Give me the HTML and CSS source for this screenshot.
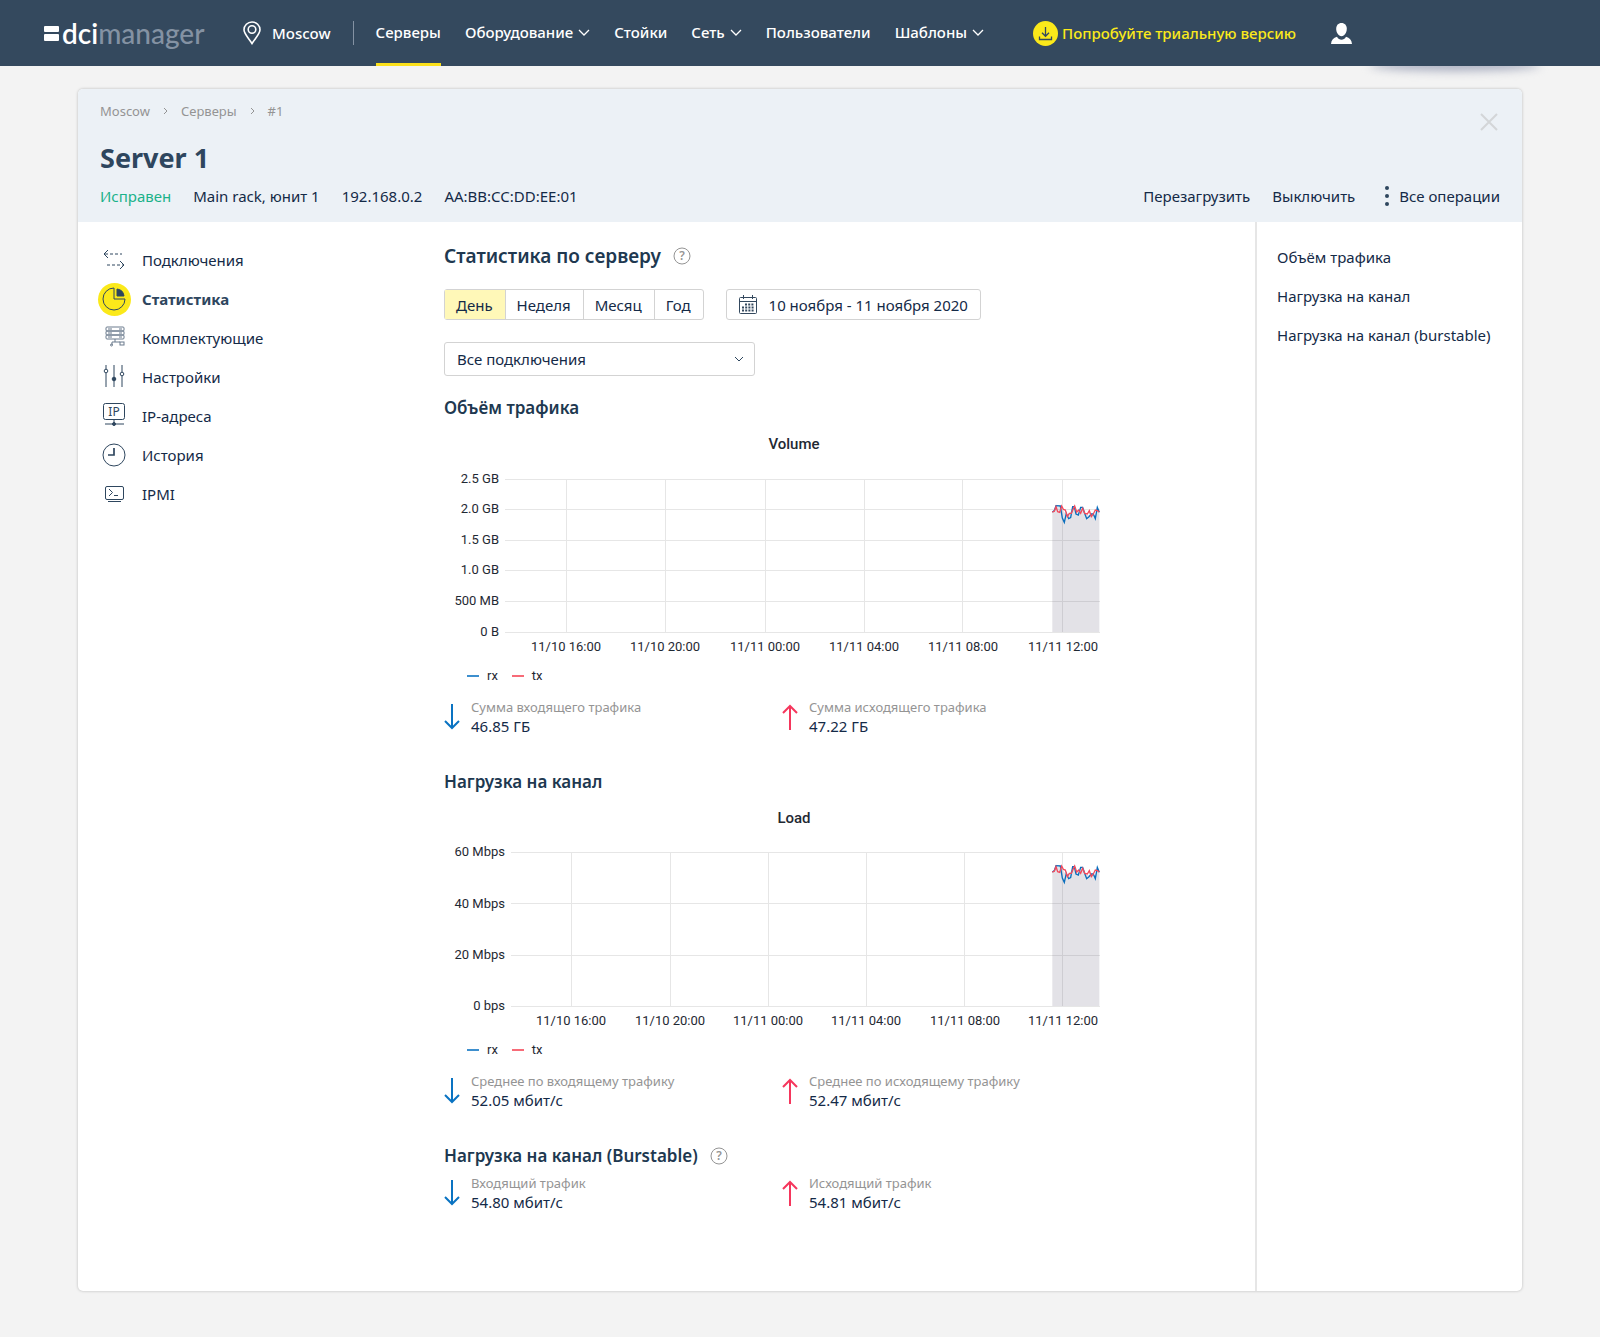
FILE: index.html
```html
<!DOCTYPE html>
<html lang="ru">
<head>
  <meta charset="utf-8">
  <title>DCImanager - Server 1</title>
  <link rel="stylesheet" href="styles.css">
</head>
<body>
  <header class="topbar">
    <a class="logo" href="#">
      <svg width="15" height="15" viewBox="0 0 15 15"><rect width="15" height="6" rx="1" fill="#fff"/><rect y="8" width="15" height="7" rx="1" fill="#fff"/></svg>
      <span><b>dci</b>manager</span>
    </a>
    <a class="location" href="#">
      <svg width="18" height="24" viewBox="0 0 18 24" fill="none" stroke="#fff" stroke-width="1.6"><path d="M9 22.500C6 17.500 1 13 1 8.800a8 7.800 0 0 1 16 0C17 13 12 17.500 9 22.500z"/><circle cx="9" cy="8.500" r="3.800"/></svg>
      Moscow
    </a>
    <nav class="menu">
      <a class="active" href="#">Серверы</a>
      <a href="#">Оборудование <svg class="chevron" width="12" height="7" viewBox="0 0 12 7"><path d="M1 1l5 5 5-5"/></svg></a>
      <a href="#">Стойки</a>
      <a href="#">Сеть <svg class="chevron" width="12" height="7" viewBox="0 0 12 7"><path d="M1 1l5 5 5-5"/></svg></a>
      <a href="#">Пользователи</a>
      <a href="#">Шаблоны <svg class="chevron" width="12" height="7" viewBox="0 0 12 7"><path d="M1 1l5 5 5-5"/></svg></a>
    </nav>
    <a class="trial" href="#">
      <svg width="25" height="25" viewBox="0 0 25 25" fill="none" stroke="#34495e" stroke-width="1.3"><circle cx="12.500" cy="12.500" r="12.500" fill="#fbe91a" stroke="none"/><path d="M12.500 6v9M9 11.800l3.500 3.500 3.500-3.500M6.500 15.500v3h12v-3"/></svg>
      Попробуйте триальную версию
    </a>
    <button class="user" aria-label="Профиль">
      <svg width="21" height="21" viewBox="0 0 21 21" fill="#fff"><path d="M10.500 0c3.200 0 5.300 2.400 5.300 5.800 0 3.700-2.200 7.400-5.300 7.400S5.200 9.500 5.200 5.800C5.200 2.400 7.300 0 10.500 0z"/><path d="M0 21c.3-4 2.500-6 6-7.200 1.200 2.200 2.700 3 4.500 3s3.300-.8 4.500-3c3.500 1.200 5.700 3.200 6 7.200z"/></svg>
    </button>
  </header>

  <main class="card">
    <div class="card-header">
      <div class="breadcrumbs">
        <a href="#">Moscow</a>
        <svg width="5" height="8" viewBox="0 0 5 8"><path d="M1 1l3 3-3 3"/></svg>
        <a href="#">Серверы</a>
        <svg width="5" height="8" viewBox="0 0 5 8"><path d="M1 1l3 3-3 3"/></svg>
        <span>#1</span>
      </div>
      <button class="close" aria-label="Закрыть">
        <svg width="18" height="18" viewBox="0 0 18 18"><path d="M1 1l16 16M17 1L1 17"/></svg>
      </button>
      <h1>Server 1</h1>
      <div class="info-row">
        <div class="info">
          <span class="status">Исправен</span>
          <span>Main rack, юнит 1</span>
          <span>192.168.0.2</span>
          <span>AA:BB:CC:DD:EE:01</span>
        </div>
        <div class="actions">
          <button>Перезагрузить</button>
          <button>Выключить</button>
          <button class="all-actions">
            <svg width="4" height="20" viewBox="0 0 4 20"><circle cx="2" cy="2" r="2"/><circle cx="2" cy="10" r="2"/><circle cx="2" cy="18" r="2"/></svg>
            Все операции
          </button>
        </div>
      </div>
    </div>

    <div class="card-body">
      <nav class="side">
        <a href="#">
          <svg viewBox="0 0 34 34"><path d="M11 7L7 11l4 4M23 18l4 4-4 4"/><path d="M8 11h17M10 22h17" stroke-dasharray="3 2"/></svg>
          Подключения
        </a>
        <a class="active" href="#">
          <svg viewBox="0 0 34 34"><circle class="badge" cx="17.500" cy="17.500" r="16.500"/><path d="M17 6a11 11 0 1 0 11 11H17z"/><path class="solid" d="M20 7a8 8 0 0 1 7 7h-7z"/></svg>
          Статистика
        </a>
        <a href="#">
          <svg class="light" viewBox="0 0 34 34"><rect x="9" y="6" width="18" height="4" rx="1"/><rect x="9" y="10" width="18" height="4" rx="1"/><rect x="9" y="14" width="18" height="4" rx="1"/><path d="M11 8h4M22 8h3M11 12h4M22 12h3M11 16h4M22 16h3M18 18v3M15 21h8M15 21v3"/><circle cx="14.500" cy="24" r="1"/><rect x="23" y="21" width="4" height="3"/></svg>
          Комплектующие
        </a>
        <a href="#">
          <svg viewBox="0 0 34 34"><path d="M9 5v4M9 13v14M17 5v22M25 5v7M25 16v11"/><circle cx="9" cy="11" r="1.800"/><circle class="solid" cx="17" cy="19" r="1.800"/><circle cx="25" cy="14" r="1.800"/></svg>
          Настройки
        </a>
        <a href="#">
          <svg viewBox="0 0 34 34"><rect x="6.500" y="4.500" width="21" height="16" rx="2"/><path d="M17 20v5M8 25h19"/><circle class="solid" cx="17" cy="25" r="1.500"/><text x="17" y="17" text-anchor="middle">IP</text></svg>
          IP-адреса
        </a>
        <a href="#">
          <svg viewBox="0 0 34 34"><circle cx="17" cy="17" r="11"/><path d="M17 10v7h-6" stroke-width="1.700"/></svg>
          История
        </a>
        <a href="#">
          <svg viewBox="0 0 34 34"><rect x="8.500" y="9.500" width="18" height="13" rx="1.500"/><path d="M12 12l3.500 3.500L12 19M17 18.500h4M11 24.500h13"/></svg>
          IPMI
        </a>
      </nav>

      <div class="content">
        <h2>Статистика по серверу
          <svg class="help" width="18" height="18" viewBox="0 0 18 18"><circle cx="9" cy="9" r="8"/><text x="9" y="13" text-anchor="middle">?</text></svg>
        </h2>
        <div class="filters">
          <div class="periods">
            <button class="active">День</button>
            <button>Неделя</button>
            <button>Месяц</button>
            <button>Год</button>
          </div>
          <button class="dates">
            <svg width="18" height="19" viewBox="0 0 18 19" fill="none" stroke="#34495e"><rect x=".5" y="2.500" width="17" height="16" rx="1"/><path d="M.5 6.500h17M4.500 0v4M13.500 0v4"/><path d="M6 9.500h9M3 12.500h12M3 15.500h12" stroke-width="2" stroke-dasharray="2 1.200"/></svg>
            10 ноября - 11 ноября 2020
          </button>
        </div>
        <div class="select">
          <select aria-label="Подключение">
            <option>Все подключения</option>
          </select>
          <svg width="10" height="7" viewBox="0 0 10 7"><path d="M1 1l4 4 4-4"/></svg>
        </div>

        <section>
          <h3>Объём трафика</h3>
          <figure class="chart">
            <figcaption>Volume</figcaption>
            <svg viewBox="0 0 700 204">
              <defs>
                <g id="series">
                  <path class="area" d="M97 66L108 50 121 50 130 62 142 80 160 52 175 70 185 52 200 75 214 76 226 75 232 56 238 66V1000H97z"/>
                  <path class="rx" d="M97 66L103 62 108 47 121 48 127 84 133 97 139 70 146 86 152 83 158 50 163 50 168 72 175 75 182 52 188 52 194 70 200 86 207 80 214 72 220 72 226 86 232 52 238 67"/>
                  <path class="tx" d="M97 66L103 64 108 50 113 65 119 67 125 48 130 58 136 60 142 80 148 70 154 70 160 56 164 48 170 66 176 60 182 70 188 55 194 70 202 72 208 62 214 80 220 72 226 60 232 62 238 66"/>
                </g>
                <clipPath id="plot"><rect width="700" height="176"/></clipPath>
              </defs>
              <path class="grid" d="M61 23.500H656M61 53.500H656M61 84.500H656M61 114.500H656M61 145.500H656M61 176.500H656M122.500 23V176M221.500 23V176M321.500 23V176M420.500 23V176M518.500 23V176M618.500 23V176"/>
              <g clip-path="url(#plot)"><use href="#series" transform="translate(576 34) scale(.3333)"/></g>
              <g class="y-labels">
                <text x="55" y="27">2.5 GB</text><text x="55" y="57">2.0 GB</text><text x="55" y="88">1.5 GB</text>
                <text x="55" y="118">1.0 GB</text><text x="55" y="149">500 MB</text><text x="55" y="180">0 B</text>
              </g>
              <g class="x-labels">
                <text x="122" y="195">11/10 16:00</text><text x="221" y="195">11/10 20:00</text><text x="321" y="195">11/11 00:00</text>
                <text x="420" y="195">11/11 04:00</text><text x="519" y="195">11/11 08:00</text><text x="619" y="195">11/11 12:00</text>
              </g>
            </svg>
            <div class="legend"><span class="rx">rx</span><span class="tx">tx</span></div>
          </figure>
          <div class="totals">
            <div class="total in">
              <svg width="16" height="26" viewBox="0 0 16 26"><path d="M8 0v24M1 17l7 7 7-7"/></svg>
              <p>Сумма входящего трафика <b>46.85 ГБ</b></p>
            </div>
            <div class="total out">
              <svg width="16" height="26" viewBox="0 0 16 26"><path d="M8 26V2M1 9l7-7 7 7"/></svg>
              <p>Сумма исходящего трафика <b>47.22 ГБ</b></p>
            </div>
          </div>
        </section>

        <section>
          <h3>Нагрузка на канал</h3>
          <figure class="chart">
            <figcaption>Load</figcaption>
            <svg viewBox="0 0 700 204">
              <path class="grid" d="M67 22.500H656M67 73.500H656M67 125.500H656M67 176.500H656M127.500 23V176M226.500 23V176M324.500 23V176M422.500 23V176M520.500 23V176M618.500 23V176"/>
              <g clip-path="url(#plot)"><use href="#series" transform="translate(576 20) scale(.3333)"/></g>
              <g class="y-labels">
                <text x="61" y="26">60 Mbps</text><text x="61" y="78">40 Mbps</text><text x="61" y="129">20 Mbps</text><text x="61" y="180">0 bps</text>
              </g>
              <g class="x-labels">
                <text x="127" y="195">11/10 16:00</text><text x="226" y="195">11/10 20:00</text><text x="324" y="195">11/11 00:00</text>
                <text x="422" y="195">11/11 04:00</text><text x="521" y="195">11/11 08:00</text><text x="619" y="195">11/11 12:00</text>
              </g>
            </svg>
            <div class="legend"><span class="rx">rx</span><span class="tx">tx</span></div>
          </figure>
          <div class="totals">
            <div class="total in">
              <svg width="16" height="26" viewBox="0 0 16 26"><path d="M8 0v24M1 17l7 7 7-7"/></svg>
              <p>Среднее по входящему трафику <b>52.05 мбит/с</b></p>
            </div>
            <div class="total out">
              <svg width="16" height="26" viewBox="0 0 16 26"><path d="M8 26V2M1 9l7-7 7 7"/></svg>
              <p>Среднее по исходящему трафику <b>52.47 мбит/с</b></p>
            </div>
          </div>
        </section>

        <section class="burstable">
          <h3>Нагрузка на канал (Burstable)
            <svg class="help" width="18" height="18" viewBox="0 0 18 18"><circle cx="9" cy="9" r="8"/><text x="9" y="13" text-anchor="middle">?</text></svg>
          </h3>
          <div class="totals">
            <div class="total in">
              <svg width="16" height="26" viewBox="0 0 16 26"><path d="M8 0v24M1 17l7 7 7-7"/></svg>
              <p>Входящий трафик <b>54.80 мбит/с</b></p>
            </div>
            <div class="total out">
              <svg width="16" height="26" viewBox="0 0 16 26"><path d="M8 26V2M1 9l7-7 7 7"/></svg>
              <p>Исходящий трафик <b>54.81 мбит/с</b></p>
            </div>
          </div>
        </section>
      </div>

      <aside class="anchors">
        <a href="#">Объём трафика</a>
        <a href="#">Нагрузка на канал</a>
        <a href="#">Нагрузка на канал (burstable)</a>
      </aside>
    </div>
  </main>
</body>
</html>
```
FILE: styles.css
```css
* {
  box-sizing: border-box;
}

body {
  margin: 0;
  background-color: #f3f3f3;
  color: #142a47;
  font-family: "Noto Sans", sans-serif;
  font-size: 15px;
  line-height: 20px;
}

a {
  color: inherit;
  text-decoration: none;
}

button,
select {
  padding: 0;
  border: none;
  background: none;
  color: inherit;
  font: inherit;
  cursor: pointer;
}

h1, h2, h3, p, figure {
  margin: 0;
}

svg {
  flex: none;
}

/* Top bar */
.topbar {
  position: relative;
  display: flex;
  align-items: center;
  height: 66px;
  padding: 0 44px;
  background-color: #34495e;
  color: #fff;
  font-weight: 500;
  white-space: nowrap;
}

/* soft shadow under the right end of the bar */
.topbar::after {
  content: "";
  position: absolute;
  z-index: -1;
  right: 60px;
  bottom: -5px;
  width: 170px;
  height: 12px;
  border-radius: 50%;
  background-color: #a9aec0;
  filter: blur(5px);
}

.logo {
  display: flex;
  align-items: center;
  gap: 3px;
  width: 208px;
  font-family: Lato, sans-serif;
  font-size: 28px;
  font-weight: 500;
  line-height: 32px;
  color: #8492a3;
}

.logo b {
  color: #fff;
  font-weight: 600;
}

.location {
  display: flex;
  align-items: center;
  gap: 11px;
  padding-right: 22px;
  border-right: 1px solid #8492a3;
}

.location svg {
  margin-left: -9px;
}

.menu {
  display: flex;
  align-self: stretch;
  gap: 24px;
  margin-left: 22px;
}

.menu a {
  display: flex;
  align-items: center;
  gap: 5px;
  border-top: 1px solid transparent;
  border-bottom: 3px solid transparent;
}

.menu .active {
  border-bottom-color: #fbe01a;
}

.chevron {
  fill: none;
  stroke: #fff;
  stroke-width: 1.3;
}

.trial {
  display: flex;
  align-items: center;
  gap: 4px;
  margin-left: 49px;
  color: #fbe91a;
}

.user {
  display: flex;
  margin-left: 35px;
}

/* Card */
.card {
  margin: 23px 78px 44px;
  border-radius: 5px;
  background-color: #fff;
  box-shadow: 0 0 3px rgba(0, 0, 0, 0.25);
}

.card-header {
  position: relative;
  padding: 12px 22px 16px;
  border-radius: 5px 5px 0 0;
  background-color: #ecf1f6;
}

.breadcrumbs {
  display: flex;
  align-items: center;
  gap: 13px;
  color: #949494;
  font-size: 13px;
}

.breadcrumbs svg {
  fill: none;
  stroke: #949494;
}

.close {
  position: absolute;
  top: 24px;
  right: 24px;
  display: flex;
}

.close svg {
  stroke: #d3d6d8;
  stroke-width: 2;
}

h1 {
  margin-top: 21px;
  color: #2e465e;
  font-size: 27px;
  line-height: 32px;
}

.info-row {
  display: flex;
  justify-content: space-between;
  margin-top: 12px;
}

.info,
.actions {
  display: flex;
  gap: 22px;
}

.status {
  color: #1bb28a;
}

.all-actions {
  display: flex;
  align-items: center;
  gap: 10px;
  margin-left: 8px;
}

.all-actions svg {
  fill: #2e465e;
}

.card-body {
  display: grid;
  grid-template-columns: 366px 1fr 267px;
}

/* Left menu */
.side {
  padding: 18px 0 0 19px;
}

.side a {
  display: flex;
  align-items: center;
  gap: 11px;
  height: 39px;
}

.side svg {
  width: 34px;
  height: 34px;
  fill: none;
  stroke: #2e465e;
}

.side .active {
  color: #2e465e;
  font-weight: bold;
}

.side .badge {
  fill: #fbe91a;
  stroke: none;
}

.side .solid {
  fill: #2e465e;
}

.side text {
  fill: #2e465e;
  stroke: none;
  font-size: 12px;
}

.side .light {
  stroke: #6b7b8d;
}

/* Statistics */
.content {
  padding: 20px 20px 79px 0;
}

h2,
h3 {
  display: flex;
  align-items: center;
  gap: 12px;
  color: #203850;
  font-weight: 600;
}

h2 {
  font-size: 19px;
  line-height: 28px;
}

h3 {
  font-size: 17px;
  line-height: 24px;
}

.help {
  fill: none;
  stroke: #949494;
}

.help text {
  fill: #949494;
  stroke: none;
  font-size: 12px;
}

.filters {
  display: flex;
  gap: 22px;
  margin-top: 19px;
}

.periods {
  display: flex;
  height: 31px;
  border: 1px solid #d3d3d3;
  border-radius: 3px;
}

.periods button {
  padding: 0 12px 0 11px;
}

.periods button + button {
  border-left: 1px solid #d3d3d3;
}

.periods .active {
  background-color: #fff8b8;
}

.dates {
  display: flex;
  align-items: center;
  gap: 12px;
  padding: 0 12px;
  border: 1px solid #d3d3d3;
  border-radius: 3px;
}

.select {
  position: relative;
  max-width: 311px;
  margin: 22px 0 20px;
}

.select select {
  display: block;
  width: 100%;
  height: 34px;
  padding: 0 12px;
  border: 1px solid #d3d3d3;
  border-radius: 3px;
  appearance: none;
}

.select svg {
  position: absolute;
  top: 14px;
  right: 11px;
  fill: none;
  stroke: #2e465e;
  pointer-events: none;
}

section + section {
  margin-top: 34px;
}

.chart {
  max-width: 700px;
  margin-top: 12px;
  color: #1f2933;
  font-family: Roboto, sans-serif;
}

.chart figcaption {
  font-size: 15px;
  font-weight: 500;
  line-height: 24px;
  text-align: center;
}

.chart svg {
  display: block;
  width: 100%;
}

.chart text {
  fill: #1f2933;
  font-size: 13px;
}

.grid {
  fill: none;
  stroke: #e6e6e6;
}

.area {
  fill: rgba(90, 85, 115, 0.17);
}

path.rx,
path.tx {
  fill: none;
  stroke: #0a6ebd;
  stroke-width: 4;
}

path.tx {
  stroke: #f2495c;
}

.y-labels {
  text-anchor: end;
}

.x-labels {
  text-anchor: middle;
}

.legend {
  display: flex;
  gap: 14px;
  margin-top: 8px;
  padding-left: 23px;
  font-size: 13px;
  line-height: 16px;
}

.legend span {
  display: flex;
  align-items: center;
  gap: 8px;
}

.legend span::before {
  content: "";
  width: 12px;
  height: 2px;
  background-color: #3d8fce;
}

.legend .tx::before {
  background-color: #f76b78;
}

.totals {
  display: grid;
  grid-template-columns: 1fr 1fr;
  max-width: 676px;
  margin-top: 14px;
}

.burstable .totals {
  margin-top: 6px;
}

.total {
  display: flex;
  align-items: center;
  gap: 11px;
}

.total svg {
  fill: none;
  stroke: #0a73c2;
  stroke-width: 2;
}

.total.out svg {
  stroke: #f5365c;
}

.total p {
  color: #949494;
  font-size: 13px;
  line-height: 19px;
}

.total b {
  display: block;
  color: #142a47;
  font-size: 15px;
  font-weight: normal;
}

/* Right column */
.anchors {
  display: flex;
  flex-direction: column;
  gap: 19px;
  padding: 25px 20px;
  border-left: 2px solid #e6e6e6;
}
```
